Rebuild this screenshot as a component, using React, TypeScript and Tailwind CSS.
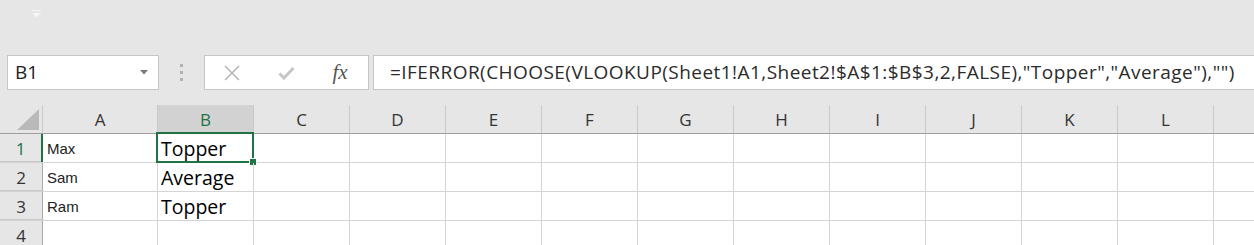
import React from "react";

const columns = ["A", "B", "C", "D", "E", "F", "G", "H", "I", "J", "K", "L", "M"];

const rows: { a: string; b: string }[] = [
  { a: "Max", b: "Topper" },
  { a: "Sam", b: "Average" },
  { a: "Ram", b: "Topper" },
  { a: "", b: "" },
];

const formula =
  '=IFERROR(CHOOSE(VLOOKUP(Sheet1!A1,Sheet2!$A$1:$B$3,2,FALSE),"Topper","Average"),"")';

const colWidth = (i: number) => (i === 0 ? "w-[115px]" : "w-[96px]");

const FormulaBar: React.FC = () => (
  <div className="flex h-[35px] items-stretch">
    {/* name box */}
    <div className="ml-[7px] flex w-[152px] items-center justify-between border border-[#c6c6c6] bg-white pl-[7px] pr-[10px]">
      <span className="text-[19px] leading-none text-[#222]">B1</span>
      <svg width="8" height="5" viewBox="0 0 8 5">
        <path d="M0 0h8L4 4.5z" fill="#7a7a7a" />
      </svg>
    </div>

    <div className="flex w-[45px] flex-col items-center justify-center gap-[4px]">
      <span className="h-[3px] w-[3px] bg-[#b3b3b3]" />
      <span className="h-[3px] w-[3px] bg-[#b3b3b3]" />
      <span className="h-[3px] w-[3px] bg-[#b3b3b3]" />
    </div>

    {/* cancel / enter / fx */}
    <div className="flex w-[165px] items-center border border-[#c6c6c6] bg-white">
      <div className="ml-[18px] flex w-[18px] justify-center">
        <svg width="16" height="16" viewBox="0 0 16 16">
          <path d="M1 1L15 15M15 1L1 15" stroke="#b8b8b8" strokeWidth="1.6" fill="none" />
        </svg>
      </div>
      <div className="ml-[36px] flex w-[18px] justify-center">
        <svg width="17" height="14" viewBox="0 0 17 14">
          <path d="M1.5 7.5L6 12L15.5 2" stroke="#c6c6c6" strokeWidth="3" fill="none" />
        </svg>
      </div>
      <div className="ml-[35px] flex w-[20px] justify-center">
        <span className="font-['Liberation_Serif',serif] text-[21px] italic leading-none text-[#555]">
          fx
        </span>
      </div>
    </div>

    {/* formula */}
    <div className="ml-[4px] flex flex-1 items-center border border-r-0 border-[#c6c6c6] bg-white pl-[16px]">
      <span className="whitespace-nowrap text-[19px] leading-none tracking-[0.45px] text-[#2b2b2b]">
        {formula}
      </span>
    </div>
  </div>
);

const Grid: React.FC = () => (
  <div className="mt-[15px]">
    {/* column headers */}
    <div className="flex h-[29px] border-b border-[#9e9e9e]">
      <div className="flex w-[43px] shrink-0 items-end justify-end border-r border-[#c9c9c9] pb-[3px] pr-[3px]">
        <svg width="22" height="21" viewBox="0 0 22 21">
          <path d="M22 0V21H0z" fill="#b9b9b9" />
        </svg>
      </div>
      {columns.map((c, i) => (
        <div
          key={c}
          className={`${colWidth(i)} flex shrink-0 items-center justify-center border-r border-[#c9c9c9] text-[17px] leading-none ${
            c === "B" ? "bg-[#d2d2d2] text-[#217346]" : "text-[#333]"
          }`}
        >
          {c === "M" ? "" : c}
        </div>
      ))}
    </div>

    {rows.map((r, ri) => (
      <div key={ri} className="flex h-[29px] border-b border-[#d4d4d4] bg-white">
        <div
          className={`flex w-[43px] shrink-0 items-center justify-center bg-[#e6e6e6] text-[17px] leading-none ${
            ri === 0
              ? "border-r-2 border-[#217346] bg-[#d2d2d2] text-[#217346]"
              : "border-r border-[#ababab] text-[#333]"
          }`}
          style={{ boxShadow: "inset 0 -1px 0 #c9c9c9" }}
        >
          {ri + 1}
        </div>
        {columns.map((c, i) => (
          <div
            key={c}
            className={`${colWidth(i)} relative flex shrink-0 items-end border-r border-[#d4d4d4]`}
          >
            {c === "A" && (
              <span className="pb-[6px] pl-[4px] font-['Liberation_Sans',Arial,sans-serif] text-[15px] leading-none text-[#222]">
                {r.a}
              </span>
            )}
            {c === "B" && (
              <span className="pb-[4px] pl-[3px] text-[19.5px] leading-none text-black">{r.b}</span>
            )}
            {c === "B" && ri === 0 && (
              <div className="absolute left-[-2px] top-[-2px] h-[31px] w-[98px] border-2 border-[#217346]">
                <div className="absolute bottom-[-4px] right-[-4px] h-[6px] w-[6px] bg-[#217346] outline outline-1 outline-white" />
              </div>
            )}
          </div>
        ))}
      </div>
    ))}
  </div>
);

export default function App() {
  return (
    <div className="h-[245px] w-[1254px] overflow-hidden bg-[#e6e6e6] font-['Open_Sans',sans-serif]">
      <div className="h-[55px] pl-[32px] pt-[10px]">
        <svg width="9" height="8" viewBox="0 0 9 8">
          <path d="M0 0.5H9" stroke="#f7f7f7" strokeWidth="1" />
          <path d="M0.5 3H8.5L4.5 7.5z" fill="#f7f7f7" />
        </svg>
      </div>
      <FormulaBar />
      <Grid />
    </div>
  );
}
